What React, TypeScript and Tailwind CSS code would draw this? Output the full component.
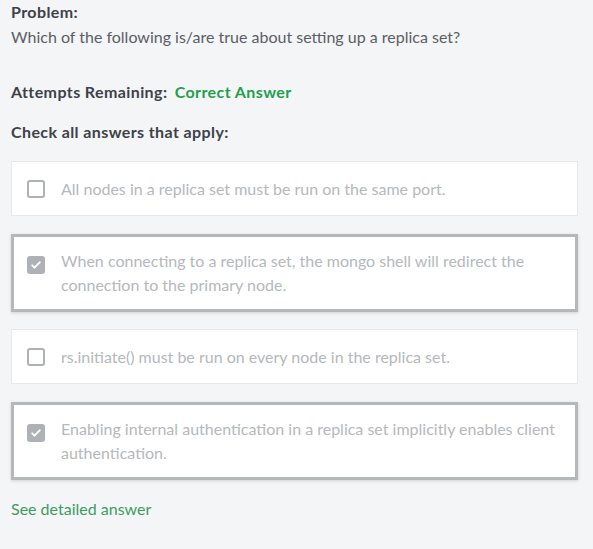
const options = [
  { text: 'All nodes in a replica set must be run on the same port.', checked: false },
  {
    text: 'When connecting to a replica set, the mongo shell will redirect the connection to the primary node.',
    checked: true,
  },
  { text: 'rs.initiate() must be run on every node in the replica set.', checked: false },
  {
    text: 'Enabling internal authentication in a replica set implicitly enables client authentication.',
    checked: true,
  },
];

function CheckBox({ checked }: { checked: boolean }) {
  if (checked) {
    return (
      <span className="flex h-[18px] w-[18px] shrink-0 items-center justify-center rounded-[3px] bg-[#aeb1b5]">
        <svg viewBox="0 0 16 16" className="h-[12px] w-[12px]" fill="none" stroke="white" strokeWidth="2.6" strokeLinecap="round" strokeLinejoin="round">
          <path d="M3 8.5l3 3 7-7" />
        </svg>
      </span>
    );
  }
  return <span className="h-[18px] w-[18px] shrink-0 rounded-[3px] border-2 border-[#aeb1b5] bg-white" />;
}

export default function App() {
  return (
    <div className="min-h-[549px] w-[593px] bg-[#f4f5f7] pl-[11px] pr-[15px] pt-[1px] font-['Lato',sans-serif] text-[16px]">
      <h2 className="leading-[22px] font-bold tracking-[0.4px] text-[#3d4148]">Problem:</h2>
      <p className="mt-[2px] leading-[24px] text-[#5a5e64]">Which of the following is/are true about setting up a replica set?</p>

      <p className="mt-[32px] leading-[22px] font-bold tracking-[0.4px] text-[#3d4148]">
        Attempts Remaining: <span className="ml-[3px] text-[#1fa04c]">Correct Answer</span>
      </p>
      <p className="mt-[18px] leading-[22px] font-bold tracking-[0.4px] text-[#3d4148]">Check all answers that apply:</p>

      <div className="mt-[18px] flex flex-col gap-[17.5px]">
        {options.map((o) =>
          o.checked ? (
            <div key={o.text} className="flex gap-[16px] border-[3px] border-[#b5b8bb] bg-white py-[12px] pl-[13px] pr-[20px] shadow-[0_1px_3px_rgba(0,0,0,0.15)]">
              <div className="pt-[7px]">
                <CheckBox checked />
              </div>
              <span className="leading-[24px] text-[#b5b8bc]">{o.text}</span>
            </div>
          ) : (
            <div key={o.text} className="flex items-center gap-[16px] border border-[#e6e8ea] bg-white pt-[15px] pb-[14px] pl-[15px] pr-[20px]">
              <CheckBox checked={false} />
              <span className="leading-[24px] text-[#b5b8bc]">{o.text}</span>
            </div>
          ),
        )}
      </div>

      <a className="mt-[17px] block leading-[24px] text-[#3d9c5e]">See detailed answer</a>
    </div>
  );
}
